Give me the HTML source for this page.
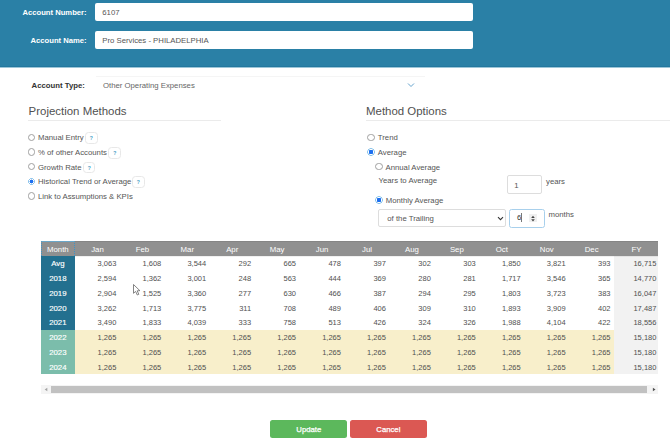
<!DOCTYPE html>
<html><head><meta charset="utf-8">
<style>
*{box-sizing:border-box;margin:0;padding:0}
html,body{width:670px;height:445px;overflow:hidden;background:#fff}
body{font-family:"Liberation Sans",sans-serif;color:#333;position:relative}
.a{position:absolute;white-space:nowrap}
#hdr{position:absolute;left:0;top:0;width:670px;height:68px;background:#2a80a6;border-bottom:1px solid #9cc6d8;box-shadow:inset 0 -1px 0 #23789f}
.hl{position:absolute;color:#fff;font-weight:bold;font-size:7.65px;text-align:right;width:80px}
.inp{position:absolute;left:95.3px;width:377.7px;height:18.3px;background:#fff;border-radius:2px;font-size:7.75px;color:#555;padding-left:7px;line-height:19.4px}
.lbl{font-size:7.75px;color:#555}
.h3{position:absolute;font-size:11.45px;color:#505050}
.rule{position:absolute;height:1px;background:#ebebeb}
.radio{position:absolute;width:7.6px;height:7.6px;border:1px solid #a0a0a0;border-radius:50%;background:#fff}
.radio.on{border:none;background:radial-gradient(circle closest-side,#1d6ff0 0,#1d6ff0 52%,#fff 60%,#fff 68%,#8cc4ea 78%,#8cc4ea 92%,rgba(255,255,255,0) 100%)}

.help{position:absolute;width:12.6px;height:11.7px;border:1px solid #e8e8e8;border-radius:3.5px;font-size:5px;color:#3b9ac4;text-align:center;line-height:11.2px;font-weight:bold}
.thdr{background:#909090;border-top:1px solid #858585}
.monthcell{border-top:1px solid #6aa6c8;border-left:1px dotted #3d94c9;border-right:1px dotted #3d94c9}
.th{color:#fff;font-size:7.8px;text-align:center}
.yc{color:#fff;font-size:7.8px;text-align:center;-webkit-text-stroke:0.15px #fff}
.td{color:#505050;font-size:7.5px}
.btn{position:absolute;top:419.5px;height:18.2px;border-radius:2.5px;color:#fff;font-size:7.75px;-webkit-text-stroke:0.25px #fff;text-align:center;line-height:20.4px}
</style></head><body>
<div id="hdr">
  <div class="hl" style="left:6.6px;top:8px">Account Number:</div>
  <div class="inp" style="top:3px">6107</div>
  <div class="hl" style="left:6.6px;top:36px">Account Name:</div>
  <div class="inp" style="top:31.2px">Pro Services - PHILADELPHIA</div>
</div>

<div class="a" style="left:96px;top:76px;width:329px;height:1px;background:#f5f5f5"></div>
<div class="a lbl" style="left:31.6px;top:81px;font-weight:bold;color:#333">Account Type:</div>
<div class="a lbl" style="left:103px;top:81px;color:#666">Other Operating Expenses</div>
<svg class="a" style="left:407px;top:82px" width="8" height="6" viewBox="0 0 8 6"><path d="M1 1.5 L4 4.5 L7 1.5" fill="none" stroke="#4a94c4" stroke-width="0.85"/></svg>

<div class="h3" style="left:28.6px;top:105.2px">Projection Methods</div>
<div class="rule" style="left:28px;top:120px;width:193.2px"></div>
<div class="h3" style="left:366px;top:105.2px">Method Options</div>
<div class="rule" style="left:366px;top:120px;width:304px"></div>

<div class="radio" style="left:27.80px;top:133.50px"></div>
<div class="a lbl" style="left:38px;top:133.20px">Manual Entry</div>
<div class="help" style="left:85.00px;top:132.30px">?</div>
<div class="radio" style="left:27.80px;top:148.20px"></div>
<div class="a lbl" style="left:38px;top:147.90px">% of other Accounts</div>
<div class="help" style="left:108.40px;top:147.00px">?</div>
<div class="radio" style="left:27.80px;top:162.90px"></div>
<div class="a lbl" style="left:38px;top:162.60px">Growth Rate</div>
<div class="help" style="left:82.90px;top:161.70px">?</div>
<div class="radio on" style="left:27.80px;top:177.60px"></div>
<div class="a lbl" style="left:38px;top:177.30px">Historical Trend or Average</div>
<div class="help" style="left:132.00px;top:176.40px">?</div>
<div class="radio" style="left:27.80px;top:192.30px"></div>
<div class="a lbl" style="left:38px;top:192.00px">Link to Assumptions &amp; KPIs</div>
<div class="radio" style="left:367.20px;top:133.60px"></div>
<div class="a lbl" style="left:377.8px;top:133.30px">Trend</div>
<div class="radio on" style="left:367.20px;top:148.20px"></div>
<div class="a lbl" style="left:377.8px;top:147.90px">Average</div>
<div class="radio" style="left:375.40px;top:162.90px"></div>
<div class="a lbl" style="left:385.5px;top:162.60px">Annual Average</div>
<div class="a lbl" style="left:378.5px;top:176.40px">Years to Average</div>
<div class="a lbl" style="left:546px;top:176.60px">years</div>
<div class="radio on" style="left:375.40px;top:196.30px"></div>
<div class="a lbl" style="left:385.7px;top:196.00px">Monthly Average</div>
<div class="a lbl" style="left:548.5px;top:210.20px">months</div>
<div class="a" style="left:507px;top:175.4px;width:35px;height:18.4px;border:1px solid #ddd;border-radius:2px;font-size:7.75px;color:#555;padding-left:6.3px;line-height:19.2px">1</div>
<div class="a" style="left:378px;top:209px;width:127.6px;height:18.3px;border:1px solid #ddd;border-radius:2px;font-size:7.75px;color:#555;padding-left:8.3px;line-height:17.6px">of the Trailing</div>
<svg class="a" style="left:496.5px;top:215.5px" width="7" height="5" viewBox="0 0 7 5"><path d="M1 1.2 L3.5 3.7 L6 1.2" fill="none" stroke="#333" stroke-width="1.05"/></svg>
<div class="a" style="left:508.8px;top:209px;width:36.4px;height:18.7px;border:1.2px solid #a8d0ec;border-radius:2.5px;font-size:7.75px;color:#333;padding-left:7.1px;line-height:16.5px">6<span style="display:inline-block;width:0.6px;height:8.2px;background:#777;vertical-align:-1.6px;margin-left:-0.1px"></span></div>
<div class="a" style="left:529.4px;top:213.6px;width:7.9px;height:8.9px;background:#f0f0f0"></div>
<svg class="a" style="left:529.4px;top:213.6px" width="8" height="9" viewBox="0 0 8 9"><path d="M2.2 4 L4 1.8 L5.8 4 Z M2.2 5.2 L4 7.4 L5.8 5.2 Z" fill="#444"/></svg>

<div class="a" style="left:614.1px;top:256px;width:43.9px;height:118.00px;background:#f2f2f2"></div><div class="a" style="left:74.6px;top:256px;width:583.4px;height:1px;background:rgba(0,0,0,0.06)"></div>
<div class="a thdr" style="left:41.1px;top:241.2px;width:616.90px;height:14.80px"></div>
<div class="a monthcell" style="left:41.1px;top:241.2px;width:33.50px;height:14.80px"></div>
<div class="a th" style="left:41.1px;top:244.90px;width:33.50px">Month</div>
<div class="a th" style="left:75.00px;top:244.90px;width:44.93px">Jan</div>
<div class="a th" style="left:119.93px;top:244.90px;width:44.93px">Feb</div>
<div class="a th" style="left:164.85px;top:244.90px;width:44.93px">Mar</div>
<div class="a th" style="left:209.78px;top:244.90px;width:44.93px">Apr</div>
<div class="a th" style="left:254.70px;top:244.90px;width:44.93px">May</div>
<div class="a th" style="left:299.62px;top:244.90px;width:44.93px">Jun</div>
<div class="a th" style="left:344.55px;top:244.90px;width:44.93px">Jul</div>
<div class="a th" style="left:389.48px;top:244.90px;width:44.93px">Aug</div>
<div class="a th" style="left:434.40px;top:244.90px;width:44.93px">Sep</div>
<div class="a th" style="left:479.33px;top:244.90px;width:44.93px">Oct</div>
<div class="a th" style="left:524.25px;top:244.90px;width:44.93px">Nov</div>
<div class="a th" style="left:569.18px;top:244.90px;width:44.93px">Dec</div>
<div class="a th" style="left:614.10px;top:244.90px;width:44.93px">FY</div>
<div class="a" style="left:41.1px;top:256.00px;width:33.50px;height:15.05px;background:#23708f"></div>
<div class="a yc" style="left:41.1px;top:259.10px;width:33.50px">Avg</div>
<div class="a td" style="right:553.67px;top:259.10px">3,063</div>
<div class="a td" style="right:508.75px;top:259.10px">1,608</div>
<div class="a td" style="right:463.82px;top:259.10px">3,544</div>
<div class="a td" style="right:418.90px;top:259.10px">292</div>
<div class="a td" style="right:373.98px;top:259.10px">665</div>
<div class="a td" style="right:329.05px;top:259.10px">478</div>
<div class="a td" style="right:284.12px;top:259.10px">397</div>
<div class="a td" style="right:239.20px;top:259.10px">302</div>
<div class="a td" style="right:194.27px;top:259.10px">303</div>
<div class="a td" style="right:149.35px;top:259.10px">1,850</div>
<div class="a td" style="right:104.42px;top:259.10px">3,821</div>
<div class="a td" style="right:59.50px;top:259.10px">393</div>
<div class="a td" style="right:13.60px;top:259.10px">16,715</div>
<div class="a" style="left:41.1px;top:270.75px;width:33.50px;height:15.05px;background:#23708f"></div>
<div class="a yc" style="left:41.1px;top:274.10px;width:33.50px">2018</div>
<div class="a td" style="right:553.67px;top:274.10px">2,594</div>
<div class="a td" style="right:508.75px;top:274.10px">1,362</div>
<div class="a td" style="right:463.82px;top:274.10px">3,001</div>
<div class="a td" style="right:418.90px;top:274.10px">248</div>
<div class="a td" style="right:373.98px;top:274.10px">563</div>
<div class="a td" style="right:329.05px;top:274.10px">444</div>
<div class="a td" style="right:284.12px;top:274.10px">369</div>
<div class="a td" style="right:239.20px;top:274.10px">280</div>
<div class="a td" style="right:194.27px;top:274.10px">281</div>
<div class="a td" style="right:149.35px;top:274.10px">1,717</div>
<div class="a td" style="right:104.42px;top:274.10px">3,546</div>
<div class="a td" style="right:59.50px;top:274.10px">365</div>
<div class="a td" style="right:13.60px;top:274.10px">14,770</div>
<div class="a" style="left:41.1px;top:285.50px;width:33.50px;height:15.05px;background:#23708f"></div>
<div class="a yc" style="left:41.1px;top:289.10px;width:33.50px">2019</div>
<div class="a td" style="right:553.67px;top:289.10px">2,904</div>
<div class="a td" style="right:508.75px;top:289.10px">1,525</div>
<div class="a td" style="right:463.82px;top:289.10px">3,360</div>
<div class="a td" style="right:418.90px;top:289.10px">277</div>
<div class="a td" style="right:373.98px;top:289.10px">630</div>
<div class="a td" style="right:329.05px;top:289.10px">466</div>
<div class="a td" style="right:284.12px;top:289.10px">387</div>
<div class="a td" style="right:239.20px;top:289.10px">294</div>
<div class="a td" style="right:194.27px;top:289.10px">295</div>
<div class="a td" style="right:149.35px;top:289.10px">1,803</div>
<div class="a td" style="right:104.42px;top:289.10px">3,723</div>
<div class="a td" style="right:59.50px;top:289.10px">383</div>
<div class="a td" style="right:13.60px;top:289.10px">16,047</div>
<div class="a" style="left:41.1px;top:300.25px;width:33.50px;height:15.05px;background:#23708f"></div>
<div class="a yc" style="left:41.1px;top:304.10px;width:33.50px">2020</div>
<div class="a td" style="right:553.67px;top:304.10px">3,262</div>
<div class="a td" style="right:508.75px;top:304.10px">1,713</div>
<div class="a td" style="right:463.82px;top:304.10px">3,775</div>
<div class="a td" style="right:418.90px;top:304.10px">311</div>
<div class="a td" style="right:373.98px;top:304.10px">708</div>
<div class="a td" style="right:329.05px;top:304.10px">489</div>
<div class="a td" style="right:284.12px;top:304.10px">406</div>
<div class="a td" style="right:239.20px;top:304.10px">309</div>
<div class="a td" style="right:194.27px;top:304.10px">310</div>
<div class="a td" style="right:149.35px;top:304.10px">1,893</div>
<div class="a td" style="right:104.42px;top:304.10px">3,909</div>
<div class="a td" style="right:59.50px;top:304.10px">402</div>
<div class="a td" style="right:13.60px;top:304.10px">17,487</div>
<div class="a" style="left:41.1px;top:315.00px;width:33.50px;height:15.05px;background:#23708f"></div>
<div class="a yc" style="left:41.1px;top:318.10px;width:33.50px">2021</div>
<div class="a td" style="right:553.67px;top:318.10px">3,490</div>
<div class="a td" style="right:508.75px;top:318.10px">1,833</div>
<div class="a td" style="right:463.82px;top:318.10px">4,039</div>
<div class="a td" style="right:418.90px;top:318.10px">333</div>
<div class="a td" style="right:373.98px;top:318.10px">758</div>
<div class="a td" style="right:329.05px;top:318.10px">513</div>
<div class="a td" style="right:284.12px;top:318.10px">426</div>
<div class="a td" style="right:239.20px;top:318.10px">324</div>
<div class="a td" style="right:194.27px;top:318.10px">326</div>
<div class="a td" style="right:149.35px;top:318.10px">1,988</div>
<div class="a td" style="right:104.42px;top:318.10px">4,104</div>
<div class="a td" style="right:59.50px;top:318.10px">422</div>
<div class="a td" style="right:13.60px;top:318.10px">18,556</div>
<div class="a" style="left:41.1px;top:329.75px;width:33.50px;height:15.05px;background:#7bbdab"></div>
<div class="a yc" style="left:41.1px;top:333.10px;width:33.50px">2022</div>
<div class="a" style="left:75px;top:329.75px;width:539.10px;height:15.05px;background:#f8efcb"></div>
<div class="a td" style="right:553.67px;top:333.10px">1,265</div>
<div class="a td" style="right:508.75px;top:333.10px">1,265</div>
<div class="a td" style="right:463.82px;top:333.10px">1,265</div>
<div class="a td" style="right:418.90px;top:333.10px">1,265</div>
<div class="a td" style="right:373.98px;top:333.10px">1,265</div>
<div class="a td" style="right:329.05px;top:333.10px">1,265</div>
<div class="a td" style="right:284.12px;top:333.10px">1,265</div>
<div class="a td" style="right:239.20px;top:333.10px">1,265</div>
<div class="a td" style="right:194.27px;top:333.10px">1,265</div>
<div class="a td" style="right:149.35px;top:333.10px">1,265</div>
<div class="a td" style="right:104.42px;top:333.10px">1,265</div>
<div class="a td" style="right:59.50px;top:333.10px">1,265</div>
<div class="a td" style="right:13.60px;top:333.10px">15,180</div>
<div class="a" style="left:41.1px;top:344.50px;width:33.50px;height:15.05px;background:#7bbdab"></div>
<div class="a yc" style="left:41.1px;top:348.10px;width:33.50px">2023</div>
<div class="a" style="left:75px;top:344.50px;width:539.10px;height:15.05px;background:#f8efcb"></div>
<div class="a td" style="right:553.67px;top:348.10px">1,265</div>
<div class="a td" style="right:508.75px;top:348.10px">1,265</div>
<div class="a td" style="right:463.82px;top:348.10px">1,265</div>
<div class="a td" style="right:418.90px;top:348.10px">1,265</div>
<div class="a td" style="right:373.98px;top:348.10px">1,265</div>
<div class="a td" style="right:329.05px;top:348.10px">1,265</div>
<div class="a td" style="right:284.12px;top:348.10px">1,265</div>
<div class="a td" style="right:239.20px;top:348.10px">1,265</div>
<div class="a td" style="right:194.27px;top:348.10px">1,265</div>
<div class="a td" style="right:149.35px;top:348.10px">1,265</div>
<div class="a td" style="right:104.42px;top:348.10px">1,265</div>
<div class="a td" style="right:59.50px;top:348.10px">1,265</div>
<div class="a td" style="right:13.60px;top:348.10px">15,180</div>
<div class="a" style="left:41.1px;top:359.25px;width:33.50px;height:15.05px;background:#7bbdab"></div>
<div class="a yc" style="left:41.1px;top:363.10px;width:33.50px">2024</div>
<div class="a" style="left:75px;top:359.25px;width:539.10px;height:15.05px;background:#f8efcb"></div>
<div class="a td" style="right:553.67px;top:363.10px">1,265</div>
<div class="a td" style="right:508.75px;top:363.10px">1,265</div>
<div class="a td" style="right:463.82px;top:363.10px">1,265</div>
<div class="a td" style="right:418.90px;top:363.10px">1,265</div>
<div class="a td" style="right:373.98px;top:363.10px">1,265</div>
<div class="a td" style="right:329.05px;top:363.10px">1,265</div>
<div class="a td" style="right:284.12px;top:363.10px">1,265</div>
<div class="a td" style="right:239.20px;top:363.10px">1,265</div>
<div class="a td" style="right:194.27px;top:363.10px">1,265</div>
<div class="a td" style="right:149.35px;top:363.10px">1,265</div>
<div class="a td" style="right:104.42px;top:363.10px">1,265</div>
<div class="a td" style="right:59.50px;top:363.10px">1,265</div>
<div class="a td" style="right:13.60px;top:363.10px">15,180</div>

<svg class="a" style="left:132.9px;top:284px" width="8" height="12" viewBox="0 0 8 12"><path d="M0.5 0.5 L0.5 9.3 L2.6 7.4 L4.3 11 L5.8 10.3 L4.2 6.8 L6.9 6.7 Z" fill="#fff" stroke="#666" stroke-width="0.8" stroke-linejoin="round"/></svg>

<div class="a" style="left:41.4px;top:385px;width:616.6px;height:8.9px;background:#f4f4f4"></div>
<div class="a" style="left:50.9px;top:385.9px;width:596.1px;height:7.1px;background:#c1c1c1"></div>
<svg class="a" style="left:43px;top:386px" width="6" height="7" viewBox="0 0 6 7"><path d="M4.3 1.8 L1.7 3.5 L4.3 5.2 Z" fill="#a3a3a3"/></svg>
<svg class="a" style="left:650.5px;top:386px" width="6" height="7" viewBox="0 0 6 7"><path d="M1.9 1.8 L4.5 3.5 L1.9 5.2 Z" fill="#505050"/></svg>

<div class="btn" style="left:270.2px;width:77.2px;background:#5cb85c">Update</div>
<div class="btn" style="left:350px;width:76.7px;background:#db5853">Cancel</div>
</body></html>
